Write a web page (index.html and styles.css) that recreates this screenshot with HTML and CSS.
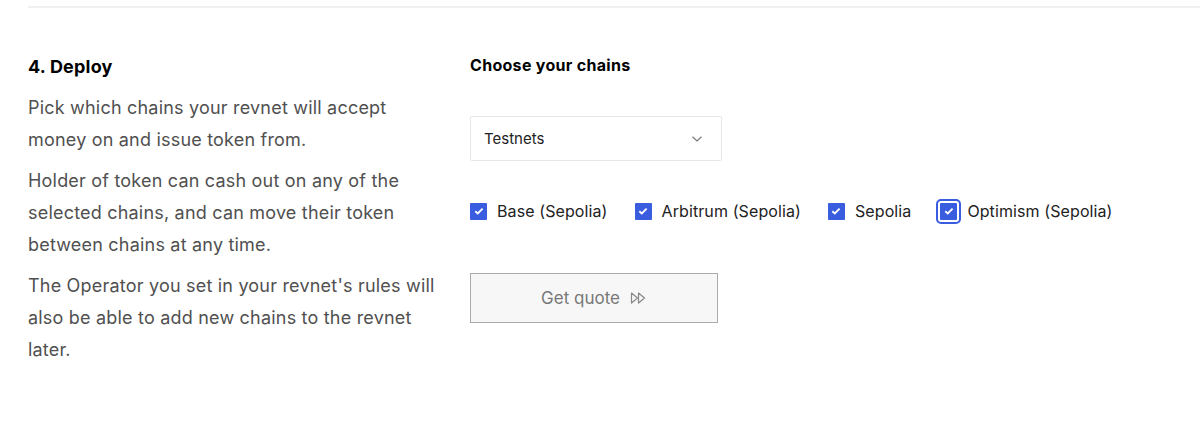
FILE: index.html
```html
<!DOCTYPE html>
<html>
<head>
<meta charset="utf-8">
<link rel="stylesheet" href="styles.css">
</head>
<body>
<div class="page">
  <div class="divider"></div>
  <section class="step">
    <div class="intro">
      <h2 class="step-title">4. Deploy</h2>
      <p class="desc">Pick which chains your revnet will accept money on and issue token from.</p>
      <p class="desc">Holder of token can cash out on any of the selected chains, and can move their token between chains at any time.</p>
      <p class="desc">The Operator you set in your revnet's rules will also be able to add new chains to the revnet later.</p>
    </div>
    <div class="form">
      <h3 class="form-title">Choose your chains</h3>
      <div class="select">
        <span>Testnets</span>
        <svg class="chev" width="12" height="8" viewBox="0 0 12 8"><path d="M1.5 1.8 L6 6 L10.5 1.8" fill="none" stroke="#777" stroke-width="1.2"/></svg>
      </div>
      <div class="chains">
        <label class="chain"><span class="box"><svg width="10" height="8" viewBox="0 0 10 8"><path d="M1.3 4.2 L3.8 6.4 L8.6 1.6" fill="none" stroke="#fff" stroke-width="1.8"/></svg></span>Base (Sepolia)</label>
        <label class="chain"><span class="box"><svg width="10" height="8" viewBox="0 0 10 8"><path d="M1.3 4.2 L3.8 6.4 L8.6 1.6" fill="none" stroke="#fff" stroke-width="1.8"/></svg></span>Arbitrum (Sepolia)</label>
        <label class="chain"><span class="box"><svg width="10" height="8" viewBox="0 0 10 8"><path d="M1.3 4.2 L3.8 6.4 L8.6 1.6" fill="none" stroke="#fff" stroke-width="1.8"/></svg></span>Sepolia</label>
        <label class="chain"><span class="box focus"><svg width="10" height="8" viewBox="0 0 10 8"><path d="M1.3 4.2 L3.8 6.4 L8.6 1.6" fill="none" stroke="#fff" stroke-width="1.8"/></svg></span>Optimism (Sepolia)</label>
      </div>
      <button class="quote">Get quote <svg width="17" height="12" viewBox="0 0 17 12"><path d="M1.5 1 L7.5 6 L1.5 11 Z M8.5 1 L14.5 6 L8.5 11 Z" fill="none" stroke="#888" stroke-width="1.2" stroke-linejoin="round"/></svg></button>
    </div>
  </section>
</div>
</body>
</html>
```
FILE: styles.css
```css
* { box-sizing: border-box; }
body {
  margin: 0;
  background: #fff;
  font-family: Inter, "Noto Sans", sans-serif;
  color: #111;
}
.page { padding-left: 28px; }
.divider {
  margin-top: 6px;
  border-top: 2px solid #f0f0f0;
}
.step {
  display: grid;
  grid-template-columns: 416px 1fr;
  column-gap: 26px;
  padding-top: 46px;
}
.step-title {
  margin: 0 0 12px;
  font-size: 18px;
  font-weight: 700;
  line-height: 26px;
  color: #000;
  letter-spacing: 0.2px;
}
.desc {
  margin: 0 0 9px;
  font-size: 18px;
  line-height: 32px;
  color: #505050;
  letter-spacing: 0.2px;
}
.form-title {
  margin: 0;
  font-size: 16px;
  font-weight: 700;
  line-height: 22px;
  color: #000;
  letter-spacing: 0.3px;
}
.select {
  margin-top: 40px;
  width: 252px;
  height: 45px;
  border: 1px solid #e6e6e6;
  border-radius: 2px;
  display: flex;
  align-items: center;
  justify-content: space-between;
  padding: 0 18px 0 13px;
  font-size: 15px;
  color: #222;
}
.chains {
  margin-top: 40px;
  display: flex;
  align-items: center;
  gap: 27px;
  font-size: 16px;
  color: #222;
  letter-spacing: 0.1px;
}
.chain { display: flex; align-items: center; gap: 10px; }
.box {
  width: 17px;
  height: 17px;
  background: #3a5cdf;
  border-radius: 1px;
  display: flex;
  align-items: center;
  justify-content: center;
}
.box.focus {
  outline: 2px solid #3a5cdf;
  outline-offset: 2px;
  margin-left: 2px;
}
.quote {
  margin-top: 52px;
  width: 248px;
  height: 50px;
  border: 1px solid #aaa;
  background: #f7f7f7;
  font-family: inherit;
  font-size: 17px;
  color: #777;
  display: flex;
  align-items: center;
  justify-content: center;
  gap: 10px;
  padding: 0;
}
```
